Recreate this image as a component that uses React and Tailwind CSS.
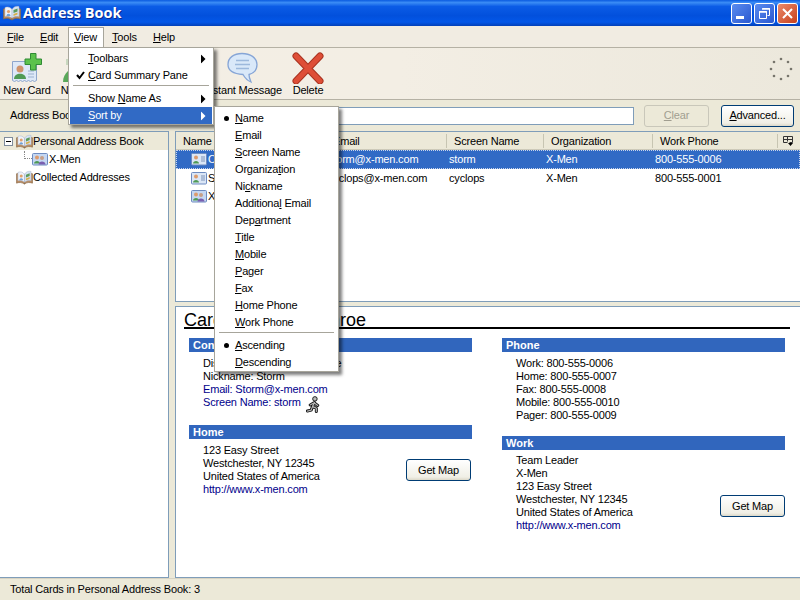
import React from "react";

// label with one underlined mnemonic letter
function Mn({ text, at = 0 }) {
  return (
    <span>
      {text.slice(0, at)}
      <u className="underline underline-offset-1">{text[at]}</u>
      {text.slice(at + 1)}
    </span>
  );
}

function BookIcon({ className }) {
  return (
    <svg viewBox="0 0 18 16" className={className}>
      <path d="M0.500 4c3-1 6-1 8.500 1v10c-3-2-6-2-8.500-1z" fill="#b98a5e" stroke="#8a6a4a" strokeWidth="0.700" />
      <path d="M9 5c2.500-2 5.500-2 8.500-1v10c-3-1-6-1-8.500 1z" fill="#b98a5e" stroke="#8a6a4a" strokeWidth="0.700" />
      <path d="M2 2.500c3-1 5-0.500 7 2v8.500c-2-1.500-4-2-7-1.500z" fill="#eef2fa" stroke="#a8b4cc" strokeWidth="0.500" />
      <path d="M9 4.500c2-3 4-3.500 7-3v10c-3-0.500-5 0-7 1.500z" fill="#d5e2f5" stroke="#a8b4cc" strokeWidth="0.500" />
      <circle cx="5.500" cy="6.500" r="1.600" fill="#e2a06a" />
      <path d="M3.500 11c0-3 4-3 4 0z" fill="#6fa0d8" />
      <path d="M10.500 5l4-1.500v3l-4 1.500z" fill="#5b9a5b" />
      <path d="M10.500 9l4-1.500v2l-4 1.500z" fill="#d8b04a" />
    </svg>
  );
}

function CardIcon({ className, group }) {
  return (
    <svg viewBox="0 0 16 14" className={className}>
      <rect x="0.500" y="1.500" width="15" height="11.500" rx="1" fill={group ? "#c5d7f2" : "#dbe6f6"} stroke="#6d8bc0" />
      <circle cx="5" cy="5.500" r="2" fill="#dd9b6c" />
      <path d="M2 11.500c0-3.500 6-3.500 6 0z" fill="#4f9a55" />
      {group ? (
        <>
          <circle cx="10" cy="6" r="2" fill="#c79f88" />
          <path d="M6.500 12.500c0-4 7-4 7 0z" fill="#7a5fb0" />
        </>
      ) : (
        <path d="M10 5h4M10 7h4M10 9h4" stroke="#7f93b8" />
      )}
    </svg>
  );
}

function NewCardIcon() {
  return (
    <svg viewBox="0 0 32 32" className="w-8 h-8">
      <path d="M1.500 9.500h24v19l-2 1-2-1-2 1-2-1-2 1-2-1-2 1-2-1-2 1-2-1-2 1-2-1z" fill="#dde8f7" stroke="#8ea6cc" />
      <circle cx="9" cy="17" r="3.500" fill="#d0936c" />
      <path d="M3 27c0-7 12-7 12 0z" fill="#4f9a55" />
      <path d="M17 19h6M17 22h6M17 25h6" stroke="#9bb0cf" />
      <path d="M19.500 1.500h5.500v5.500h5.500v5.500h-5.500v5.500h-5.500v-5.500H14V7h5.500z" fill="#5cc24c" stroke="#2f8a35" />
    </svg>
  );
}

function NewListIcon() {
  return (
    <svg viewBox="0 0 32 32" className="w-8 h-8 -ml-[4px]">
      <path d="M0 30c0-5 2-8 5-11v11z" fill="#5aa85a" />
      <path d="M3 7l3 0v6h-3z" fill="#c9d8c0" />
    </svg>
  );
}

function MessageIcon() {
  return (
    <svg viewBox="0 0 32 32" className="w-8 h-8">
      <path d="M15 1.500c8 0 15 4 15 11 0 6-4 9-8 10 0 3 1 5 2 7.500-4-1.500-6-4-8-7.500C8 22 1 19 1 12.500 1 5.500 7 1.500 15 1.500z" fill="#d9e8f9" stroke="#86a5d6" strokeWidth="1.300" />
      <path d="M9 8.500h13M8 12.500h15M9 16.500h13" stroke="#9cb8dc" strokeWidth="1.300" />
    </svg>
  );
}

function DeleteIcon() {
  return (
    <svg viewBox="0 0 32 32" className="w-8 h-8">
      <path d="M4 4l24 25M28 4L4 29" stroke="#a93320" strokeWidth="7" strokeLinecap="round" fill="none" />
      <path d="M4 4l24 25M28 4L4 29" stroke="#de4e37" strokeWidth="5" strokeLinecap="round" fill="none" />
    </svg>
  );
}

function RunnerIcon() {
  const limbs = "M9 7L7 11M8 7.500L4.500 9.500M9 7.500l3.500 2.500M7 11l4 2v3.500M7 11l-1.500 4-4 1";
  return (
    <svg viewBox="0 0 16 18" className="w-[15px] h-[17px]">
      <path d={limbs} stroke="#111" strokeWidth="3.200" strokeLinecap="round" strokeLinejoin="round" fill="none" />
      <path d={limbs} stroke="#b5b5b5" strokeWidth="1.300" strokeLinecap="round" strokeLinejoin="round" fill="none" />
      <circle cx="9.500" cy="3" r="2.400" fill="#bbb" stroke="#111" />
    </svg>
  );
}

function Spinner() {
  const dots = [[12, 2], [19, 5], [22, 12], [19, 19], [12, 22], [5, 19], [2, 12], [5, 5]];
  return (
    <svg viewBox="0 0 24 24" className="w-6 h-6">
      {dots.map(([x, y], i) => (
        <circle key={i} cx={x} cy={y} r="1.300" fill="#77756c" />
      ))}
    </svg>
  );
}

function WinButton({ className, children }) {
  return (
    <div className={`w-[21px] h-[21px] rounded-[3px] border border-white flex items-center justify-center ${className}`}>
      {children}
    </div>
  );
}

function TitleBar() {
  return (
    <div className="h-[26px] shrink-0 flex items-center pl-[3px] pr-[2px] bg-[linear-gradient(180deg,#0a5be0_0%,#3a8cf5_10%,#0b5ce6_25%,#0250dc_60%,#0357e8_85%,#0340b8_100%)]">
      <BookIcon className="w-[18px] h-[16px]" />
      <div className="ml-[2px] text-white font-bold tracking-normal text-[14.500px] font-['Open_Sans',sans-serif] [text-shadow:1px_1px_0_#0b2a8f]">Address Book</div>
      <div className="ml-auto flex gap-[2px]">
        <WinButton className="bg-[linear-gradient(135deg,#5a8cf0,#2a58d0)]">
          <div className="w-[8px] h-[3px] bg-white mt-[9px] mr-[3px]" />
        </WinButton>
        <WinButton className="bg-[linear-gradient(135deg,#5a8cf0,#2a58d0)]">
          <svg viewBox="0 0 13 13" className="w-[13px] h-[13px]">
            <path d="M4.500 1.500h7v7h-2M1.500 4.500h7v7h-7z" fill="none" stroke="#fff" />
            <path d="M4 2h8M1 5h8" stroke="#fff" strokeWidth="1.500" />
          </svg>
        </WinButton>
        <WinButton className="bg-[linear-gradient(135deg,#ea8a6a,#c8401c)]">
          <svg viewBox="0 0 13 13" className="w-[13px] h-[13px]">
            <path d="M2 2l9 9M11 2l-9 9" stroke="#fff" strokeWidth="2" />
          </svg>
        </WinButton>
      </div>
    </div>
  );
}

function MenuBar() {
  return (
    <div className="h-[22px] shrink-0 flex items-center pl-[1px] pt-[1px] bg-[#f1ece2] border-b border-[#b5b1a4]">
      <div className="w-[33px] pl-[6px]"><Mn text="File" /></div>
      <div className="w-[34px] pl-[6px]"><Mn text="Edit" /></div>
      <div className="w-[36px] h-[21px] pl-[5px] flex items-center bg-white border border-[#a7a59b] border-b-0 leading-[17px]"><Mn text="View" /></div>
      <div className="w-[41px] pl-[8px]"><Mn text="Tools" /></div>
      <div className="w-[40px] pl-[8px]"><Mn text="Help" /></div>
    </div>
  );
}

function ToolButton({ icon, label, className }) {
  return (
    <div className={`flex flex-col items-center ${className}`}>
      <div className="h-[32px]">{icon}</div>
      <div className="leading-[13px] whitespace-nowrap">{label}</div>
    </div>
  );
}

function Toolbar() {
  return (
    <div className="h-[52px] shrink-0 flex items-start pt-[4px] bg-[linear-gradient(90deg,#f3eee5,#f3eee4_50%,#ece8dc)] border-b border-[#b5b1a4]">
      <ToolButton className="w-[54px]" icon={<NewCardIcon />} label="New Card" />
      <ToolButton className="w-[54px]" icon={<NewListIcon />} label="New List" />
      <ToolButton className="w-[60px]" icon={<CardIcon className="w-8 h-8" />} label="Properties" />
      <ToolButton className="w-[35px]" icon={<div />} label="Write" />
      <ToolButton className="w-[80px]" icon={<MessageIcon />} label="Instant Message" />
      <ToolButton className="w-[50px]" icon={<DeleteIcon />} label="Delete" />
      <div className="ml-auto mr-[7px] mt-[5px]"><Spinner /></div>
    </div>
  );
}

function SearchBar() {
  return (
    <div className="h-[31px] shrink-0 flex items-center pl-[10px] pr-[6px] bg-[#ece9d8]">
      <div className="w-[140px]">Address Book Contains:</div>
      <div className="w-[484px] h-[18px] bg-white border border-[#7f9db9]" />
      <div className="ml-[10px] w-[65px] h-[22px] rounded-[3px] border border-[#c9c7ba] flex items-center justify-center text-[#a19e90]"><Mn text="Clear" /></div>
      <div className="ml-[12px] w-[73px] h-[22px] rounded-[3px] border border-[#003c74] bg-[linear-gradient(180deg,#fff,#f0efe6_85%,#dcd8c8)] flex items-center justify-center"><Mn text="Advanced..." /></div>
    </div>
  );
}

function Tree() {
  return (
    <div className="w-[169px] shrink-0 bg-white border border-[#7f9db9] border-l-0">
      <div className="h-[18px] flex items-center bg-[#ece9d8] pl-[4px]">
        <div className="w-[9px] h-[9px] border border-[#7f8c9c] bg-white flex items-center justify-center mr-[3px]">
          <div className="w-[5px] h-[1px] bg-black" />
        </div>
        <BookIcon className="w-[17px] h-[15px]" />
        <span>Personal Address Book</span>
      </div>
      <div className="h-[18px] flex items-center pl-[24px]">
        <div className="w-[8px] h-[8px] -mt-[8px] border-l border-b border-dotted border-[#888]" />
        <CardIcon group className="w-[16px] h-[14px]" />
        <span className="ml-[1px]">X-Men</span>
      </div>
      <div className="h-[18px] flex items-center pl-[16px]">
        <BookIcon className="w-[17px] h-[15px]" />
        <span>Collected Addresses</span>
      </div>
    </div>
  );
}

const columns = [
  ["w-[150px]", "Name"],
  ["w-[121px]", "Email"],
  ["w-[97px]", "Screen Name"],
  ["w-[109px]", "Organization"],
  ["w-[125px]", "Work Phone"],
];

const rows = [
  { icon: false, name: "Ororo Monroe", email: "storm@x-men.com", sn: "storm", org: "X-Men", phone: "800-555-0006", selected: true },
  { icon: false, name: "Scott Summers", email: "cyclops@x-men.com", sn: "cyclops", org: "X-Men", phone: "800-555-0001" },
  { icon: true, name: "X-Men", email: "", sn: "", org: "", phone: "" },
];

function CardList() {
  return (
    <div className="h-[171px] shrink-0 bg-white border border-[#7f9db9] border-r-0 overflow-hidden">
      <div className="h-[18px] pt-[1px] flex items-center bg-[#ece9d8] border-b border-[#cdcab9]">
        {columns.map(([w, label]) => (
          <div key={label} className={`${w} pl-[7px] h-[14px] leading-[14px] border-r border-[#c7c5b2] truncate`}>{label}</div>
        ))}
        <svg viewBox="0 0 12 12" className="w-[12px] h-[12px] ml-[4px]">
          <path d="M1.500 1.500h9v6h-3M1.500 1.500v6h4M1.500 4.500h9M5.500 1.500v5" fill="none" stroke="#333" />
          <path d="M6 8h5l-2.500 3z" fill="#000" />
        </svg>
      </div>
      {rows.map((r) => (
        <div key={r.name} className={`h-[18.500px] flex items-center ${r.selected ? "bg-[#316ac5] text-white outline-1 -outline-offset-1 outline-dotted outline-[#c8d4ea]" : ""}`}>
          <div className="w-[150px] pl-[15px] flex items-center">
            <CardIcon group={r.icon} className="w-[16px] h-[14px] shrink-0" />
            <span className="ml-[1px] truncate">{r.name}</span>
          </div>
          <div className="w-[121px] pl-[2px]">{r.email}</div>
          <div className="w-[96px] pl-[2px]">{r.sn}</div>
          <div className="w-[109px] pl-[3px]">{r.org}</div>
          <div className="pl-[3px]">{r.phone}</div>
        </div>
      ))}
    </div>
  );
}

function SectionHead({ children }) {
  return <div className="h-[14px] leading-[14px] bg-[#3166bd] text-white font-bold tracking-normal pl-[4px]">{children}</div>;
}

function Lines({ items, className = "" }) {
  return (
    <div className={`pl-[14px] leading-[13px] ${className}`}>
      {items.map((t) => (
        <div key={t}>{t}</div>
      ))}
    </div>
  );
}

function MapButton({ className }) {
  return (
    <div className={`w-[65px] h-[22px] rounded-[3px] border border-[#003c74] bg-[linear-gradient(180deg,#fff,#f0efe6_85%,#dcd8c8)] flex items-center justify-center ${className}`}>Get Map</div>
  );
}

function CardPane() {
  return (
    <div className="flex-1 bg-white border border-[#7f9db9] border-r-0 pl-[8px] pr-[10px] pt-[1px]">
      <div className="text-[18px] tracking-normal h-[21px] leading-[24px] font-['Liberation_Sans',sans-serif] border-b-2 border-black">Card for Ororo Monroe</div>
      <div className="flex pl-[5px] pt-[9px] gap-[30px]">
        <div className="w-[283px]">
          <SectionHead>Contact</SectionHead>
          <Lines className="pt-[5px]" items={["Display Name: Ororo Monroe", "Nickname: Storm"]} />
          <div className="pl-[14px] leading-[13px] text-[#00008b]">
            <div>Email: Storm@x-men.com</div>
            <div className="flex items-center h-[13px]">
              Screen Name: storm
              <span className="ml-[5px] mt-[3px]"><RunnerIcon /></span>
            </div>
          </div>
          <div className="mt-[16px]">
            <SectionHead>Home</SectionHead>
            <div className="flex pt-[5px]">
              <div className="flex-1">
                <Lines items={["123 Easy Street", "Westchester, NY 12345", "United States of America"]} />
                <div className="pl-[14px] leading-[13px] text-[#00008b]">http://www.x-men.com</div>
              </div>
              <MapButton className="mt-[15px] mr-[1px]" />
            </div>
          </div>
        </div>
        <div className="w-[283px]">
          <SectionHead>Phone</SectionHead>
          <Lines className="pt-[5px]" items={["Work: 800-555-0006", "Home: 800-555-0007", "Fax: 800-555-0008", "Mobile: 800-555-0010", "Pager: 800-555-0009"]} />
          <div className="mt-[14px]">
            <SectionHead>Work</SectionHead>
            <div className="flex pt-[4px]">
              <div className="flex-1">
                <Lines items={["Team Leader", "X-Men", "123 Easy Street", "Westchester, NY 12345", "United States of America"]} />
                <div className="pl-[14px] leading-[13px] text-[#00008b]">http://www.x-men.com</div>
              </div>
              <MapButton className="mt-[41px]" />
            </div>
          </div>
        </div>
      </div>
    </div>
  );
}

function Arrow({ light }) {
  return (
    <svg viewBox="0 0 5 9" className="absolute right-[6px] top-1/2 -translate-y-1/2 w-[5px] h-[9px]">
      <path d="M0 0l4.500 4.500L0 9z" fill={light ? "#fff" : "#000"} />
    </svg>
  );
}

function Item({ text, at, arrow, check, dot, active, className }) {
  return (
    <div className={`relative h-[17px] leading-[17px] ${className} ${active ? "bg-[#316ac5] text-white" : ""}`}>
      {check && (
        <svg viewBox="0 0 9 9" className="absolute left-[6px] top-[4px] w-[9px] h-[9px]">
          <path d="M1 4l2.500 3L8 1" fill="none" stroke="#000" strokeWidth="2" />
        </svg>
      )}
      {dot && <div className="absolute left-[9px] top-[6px] w-[5px] h-[5px] rounded-full bg-black" />}
      <Mn text={text} at={at} />
      {arrow && <Arrow light={active} />}
    </div>
  );
}

function Separator({ className }) {
  return <div className={`h-[1px] bg-[#a7a59b] mx-[3px] ${className}`} />;
}

const menuBox = "absolute bg-white border border-[#a7a59b] shadow-[3px_3px_3px_rgba(0,0,0,0.5)] z-10";

function ViewMenu() {
  return (
    <div className={`${menuBox} left-[68px] top-[47px] w-[146px] h-[78px] pt-[2px] px-[1px]`}>
      <Item className="pl-[18px]" text="Toolbars" at={0} arrow />
      <Item className="pl-[18px]" text="Card Summary Pane" at={0} check />
      <Separator className="mt-[1px] mb-[4px]" />
      <Item className="pl-[18px]" text="Show Name As" at={5} arrow />
      <Item className="pl-[18px]" text="Sort by" at={0} arrow active />
    </div>
  );
}

const sortItems = [
  ["Name", 0], ["Email", 0], ["Screen Name", 0], ["Organization", 8], ["Nickname", 2],
  ["Additional Email", 9], ["Department", 3], ["Title", 0], ["Mobile", 0], ["Pager", 0],
  ["Fax", 0], ["Home Phone", 0], ["Work Phone", 0],
];

function SortMenu() {
  return (
    <div className={`${menuBox} left-[214px] top-[106px] w-[125px] h-[266px] pt-[3px]`}>
      {sortItems.map(([t, at], i) => (
        <Item className="pl-[20px]" key={t} text={t} at={at} dot={i === 0} />
      ))}
      <Separator className="mt-[1px] mb-[4px] mx-[4px]" />
      <Item className="pl-[20px]" text="Ascending" at={0} dot />
      <Item className="pl-[20px]" text="Descending" at={0} />
    </div>
  );
}

export default function App() {
  return (
    <div className="relative w-[800px] h-[600px] overflow-hidden flex flex-col bg-[#ece9d8] text-black text-[11px] tracking-[-0.18px] font-['Liberation_Sans',sans-serif]">
      <TitleBar />
      <MenuBar />
      <Toolbar />
      <SearchBar />
      <div className="flex-1 flex gap-[6px] min-h-0">
        <Tree />
        <div className="flex-1 flex flex-col gap-[4px] min-w-0">
          <CardList />
          <CardPane />
        </div>
      </div>
      <div className="h-[22px] shrink-0 flex items-center pl-[10px] bg-[#ece9d8] border-t border-[#d8d4c4]">Total Cards in Personal Address Book: 3</div>
      <ViewMenu />
      <SortMenu />
    </div>
  );
}
